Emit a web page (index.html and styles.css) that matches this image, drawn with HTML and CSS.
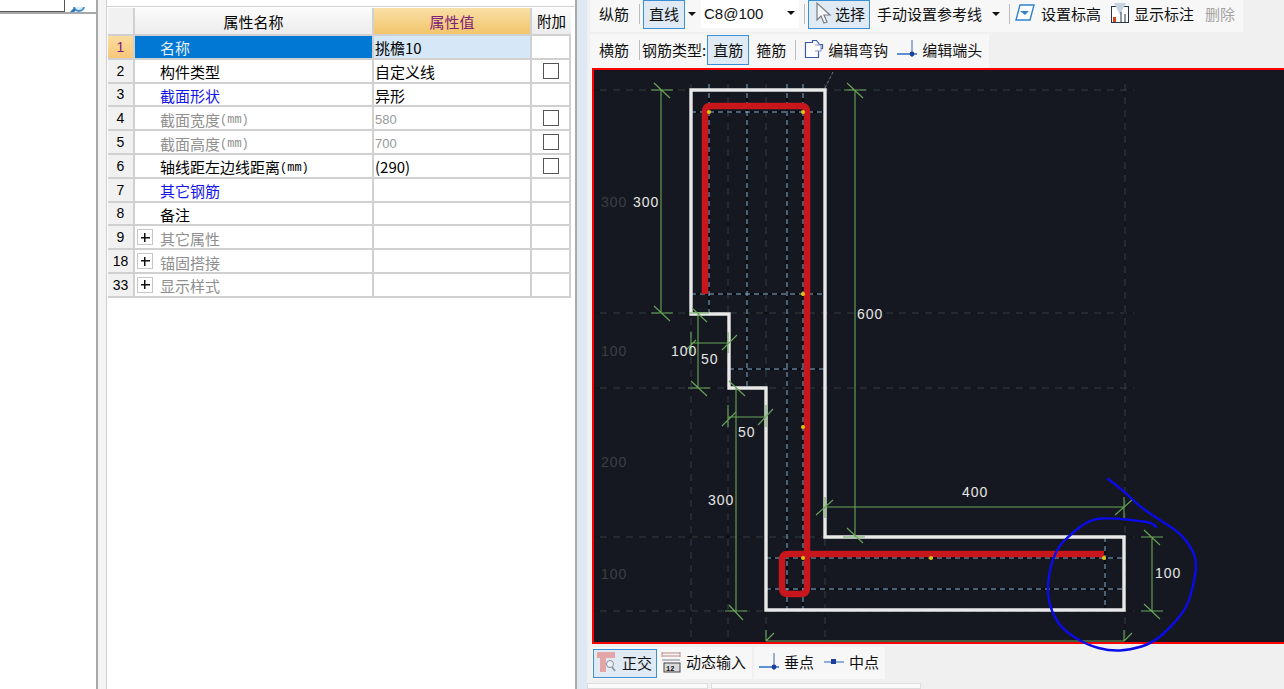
FILE: index.html
```html
<!DOCTYPE html>
<html lang="zh-CN">
<head>
<meta charset="utf-8">
<title>属性编辑</title>
<link rel="stylesheet" href="styles.css">
</head>
<body>
<div class="app">
  <aside class="tree">
    <div class="search">
      <div class="search-input"></div>
      <div class="search-btn">
        <svg width="22" height="10" viewBox="0 0 22 10"><circle cx="14" cy="-1" r="5" fill="#dcecf9" stroke="#3d8fd1" stroke-width="2"/><path d="M10 2 5 7" stroke="#2a76b8" stroke-width="3"/></svg>
      </div>
    </div>
  </aside>
  <section class="props">
    <div class="panel">
      <div class="props-top"></div>
      <div class="grid">
        <div class="c head num"></div><div class="c head">属性名称</div><div class="c head value-head">属性值</div><div class="c head extra-head">附加</div>

        <div class="c num cur">1</div><div class="c name sel">名称</div><div class="c val vsel">挑檐10</div><div class="c box"></div>
        <div class="c num">2</div><div class="c name">构件类型</div><div class="c val">自定义线</div><div class="c box"><i class="chk"></i></div>
        <div class="c num">3</div><div class="c name blue">截面形状</div><div class="c val">异形</div><div class="c box"></div>
        <div class="c num">4</div><div class="c name gray"><span>截面宽度</span><small>(mm)</small></div><div class="c val gnum">580</div><div class="c box"><i class="chk"></i></div>
        <div class="c num">5</div><div class="c name gray"><span>截面高度</span><small>(mm)</small></div><div class="c val gnum">700</div><div class="c box"><i class="chk"></i></div>
        <div class="c num">6</div><div class="c name"><span>轴线距左边线距离</span><small>(mm)</small></div><div class="c val">(290)</div><div class="c box"><i class="chk"></i></div>
        <div class="c num">7</div><div class="c name blue">其它钢筋</div><div class="c val"></div><div class="c box"></div>
        <div class="c num">8</div><div class="c name">备注</div><div class="c val"></div><div class="c box"></div>
        <div class="c num">9</div><div class="c name gray tree-row"><i class="plus"></i>其它属性</div><div class="c val"></div><div class="c box"></div>
        <div class="c num">18</div><div class="c name gray tree-row"><i class="plus"></i>锚固搭接</div><div class="c val"></div><div class="c box"></div>
        <div class="c num">33</div><div class="c name gray tree-row"><i class="plus"></i>显示样式</div><div class="c val"></div><div class="c box"></div>
      </div>
    </div>
  </section>
  <main class="editor">
    <div class="bars">
      <div class="bar bar1">
        <span class="lbl">纵筋</span>
        <span class="sep s-line"></span>
        <span class="tbtn">直线</span>
        <span class="caret c-line"></span>
        <span class="combo">C8@100<span class="caret c-combo"></span></span>
        <span class="sep s-combo"></span>
        <span class="tbtn pick">
          <svg width="18" height="24" viewBox="0 0 18 24"><path d="M2 2v17l4-4 3 7 3-1-3-7h6z" fill="#f4f6f8" stroke="#7b7f85" stroke-width="1.2"/></svg>
          <span>选择</span></span>
        <span class="lbl manual">手动设置参考线</span>
        <span class="caret c-manual"></span>
        <span class="sep s-manual"></span>
        <span class="lbl ico level">
          <svg width="20" height="20" viewBox="0 0 20 20"><path d="M5 2h14l-4 15H1z" fill="#fff" stroke="#2c84cf" stroke-width="1.4"/><path d="M5 8h9l-4 4z" fill="#2c84cf"/></svg>
          <span>设置标高</span></span>
        <span class="lbl ico mark">
          <svg width="20" height="22" viewBox="0 0 20 22"><rect x="1.5" y="4.5" width="17" height="16" fill="#fff" stroke="#26344a"/><path d="M4 1h12l-6 12z" fill="#c6d4e2"/><path d="M11 10v10M15 12v8" stroke="#26344a"/><rect x="3" y="15" width="3" height="5" fill="#d8401f"/></svg>
          <span>显示标注</span></span>
        <span class="lbl dis">删除</span>
      </div>
      <div class="bar bar2">
        <span class="lbl">横筋</span>
        <span class="sep s-cross"></span>
        <span class="lbl type">钢筋类型:</span>
        <span class="tbtn straight">直筋</span>
        <span class="lbl hoop">箍筋</span>
        <span class="sep s-hoop"></span>
        <span class="lbl ico hook">
          <svg width="20" height="20" viewBox="0 0 20 20"><path d="M1.5 3.5h7v-2h4l3 4h3v4h-4v9h-13z" fill="#fff" stroke="#3c5aa6" stroke-width="1.2"/><path d="M11 6h6v6h-6" fill="#fff" stroke="#8093c6"/></svg>
          <span>编辑弯钩</span></span>
        <span class="lbl ico end">
          <svg width="20" height="20" viewBox="0 0 20 20"><path d="M0 15h20" stroke="#2a6fc4" stroke-width="1.5"/><path d="M15 1v17" stroke="#5c7fb0" stroke-width="1.2"/><circle cx="15" cy="15" r="2.4" fill="#1c3f9a"/></svg>
          <span>编辑端头</span></span>
      </div>
    </div>
    <div class="canvas">
      <svg class="drawing" viewBox="594 70 690 572" width="690" height="572" xmlns="http://www.w3.org/2000/svg">
        <defs>
          <path id="axes" d="M594 90H1134M594 313H1134M594 388H1134M594 537H1134M594 611H1134M691 78V642M728 78V642M766 78V642M825 78V642M1125 78V642"/>
          <path id="guides" d="M709 84V313M747 84V388M787 84V611M803 84V611M691 112H825M691 294H825M729 369H825M766 558H1124M766 589H1124M1105 537V611"/>
        </defs>
        <use href="#axes" class="axis-base"/>
        <use href="#axes" class="axis-dash"/>
        <g class="faint">
          <text x="601" y="207">300</text><text x="601" y="356">100</text>
          <text x="601" y="467">200</text><text x="601" y="579">100</text>
        </g>
        <use href="#guides" class="guide-base"/>
        <use href="#guides" class="guide-dash"/>
        <path class="tail" d="M825 88 833 72"/>
        <path class="outline" d="M691 90H825V537H1124V610H766V388H729V314H691Z"/>
        <path class="rebar" d="M705 294V112Q705 106 711 106H801Q807 106 807 112V588Q807 594 801 594H788Q782 594 782 588V560Q782 554 788 554H1104"/>
        <g class="node">
          <circle cx="709" cy="112" r="2"/><circle cx="803" cy="112" r="2"/><circle cx="803" cy="294" r="2"/>
          <circle cx="803" cy="427" r="2"/><circle cx="803" cy="558" r="2"/><circle cx="931" cy="558" r="2"/><circle cx="1104" cy="558" r="2"/>
        </g>
        <g class="dim">
          <path d="M651 90H673M661 90V313M651 313H673M654 83l16 15M654 306l16 15"/>
          <path d="M844 90H866M855 90V537M843 537H865M847 83l16 15M847 528l16 15"/>
          <path d="M698 313V388M689 313H709M688 388H710M692 308l15 14M691 381l16 15"/>
          <path d="M691 343H728M691 332V353M728 332V353M722 350l15-15M686 350l10-10"/>
          <path d="M736 388V611M725 611H747M729 381l16 15M729 605l14 15"/>
          <path d="M728 417H766M728 405V427M766 405V427M722 426l14-14M758 425l15-16"/>
          <path d="M825 507H1124M825 497V518M1124 497V518M816 515l17-15M1115 515l17-15"/>
          <path d="M1141 537H1163M1152 537V611M1141 611H1163M1144 530l16 15M1144 604l16 15"/>
          <path d="M766 641H1124M766 630V641M766 641l8-8M1124 630V641M1124 641l8-8"/>
        </g>
        <g class="dimtxt">
          <text x="633" y="207">300</text><text x="857" y="319">600</text><text x="671" y="356">100</text>
          <text x="701" y="364">50</text><text x="738" y="437">50</text><text x="708" y="505">300</text>
          <text x="962" y="497">400</text><text x="1155" y="578">100</text>
        </g>
        <path class="pen" d="M1108 479Q1123 490 1131.5 498.5Q1140 507 1151.5 514.5Q1163 522 1171.5 527.5Q1180 533 1186.5 541.5Q1193 550 1195 557.5Q1197 565 1195 576Q1193 587 1190 597Q1187 607 1180 616Q1173 625 1163 634Q1153 643 1141.5 646.5Q1130 650 1120 650.5Q1110 651 1098.5 648Q1087 645 1075 637.5Q1063 630 1057.5 621.5Q1052 613 1049.5 603Q1047 593 1048.5 580Q1050 567 1054 557Q1058 547 1064 541Q1070 535 1080 527Q1090 519 1101.5 518.5Q1113 518 1126.5 519.5Q1140 521 1146.5 522Q1153 523 1156 527"/>
      </svg>
    </div>
    <div class="status">
      <div class="sgroup first">
        <span class="tbtn ortho">
          <svg width="22" height="22" viewBox="0 0 22 22"><path d="M1 1h18v6h-9v14H4V7H1z" fill="#e3a5a5"/><circle cx="14" cy="13" r="3.5" fill="#eef1f4" stroke="#8a9098"/><path d="M16 16l3 4" stroke="#8a9098" stroke-width="1.6"/></svg>
          <span>正交</span></span>
        <span class="lbl ico dyn">
          <svg width="20" height="22" viewBox="0 0 20 22"><path d="M1 2h18M1 5h18M1 1v5M19 1v5" stroke="#b98a8a"/><path d="M1 9h18" stroke="#7d8289"/><rect x="3" y="12" width="16" height="9" fill="#d9dadb" stroke="#444"/><text x="5" y="20" class="mini">12</text></svg>
          <span>动态输入</span></span>
      </div>
      <div class="sgroup second">
        <span class="lbl ico foot">
          <svg width="22" height="20" viewBox="0 0 22 20"><path d="M1 15h20" stroke="#2a6fc4" stroke-width="1.5"/><path d="M16 1v17" stroke="#5c7fb0" stroke-width="1.2"/><circle cx="16" cy="15" r="2.4" fill="#1c3f9a"/></svg>
          <span>垂点</span></span>
        <span class="lbl ico mid">
          <svg width="20" height="10" viewBox="0 0 20 10"><path d="M0 5h20" stroke="#6d95cc" stroke-width="1.5"/><rect x="7" y="2" width="5" height="5" fill="#1c3f9a"/></svg>
          <span>中点</span></span>
      </div>
    </div>
    <div class="tabs"><span class="tab t1"></span><span class="tab t2"></span></div>
  </main>
</div>
</body>
</html>
```
FILE: styles.css
```css
* { box-sizing: border-box; }
html, body { margin: 0; height: 100%; overflow: hidden; }
body { font-family: "Noto Sans CJK SC", "Liberation Sans", sans-serif; font-size: 15px; color: #000; background: #f0f0f0; }
.app { display: flex; width: 1284px; height: 689px; }

/* left tree pane */
.tree { width: 98px; background: #fff; border-right: 2px solid #a6a8aa; flex: none; }
.search { display: flex; height: 14px; border-bottom: 2px solid #a8a8a8; }
.search-input { width: 65px; background: #fff; border-right: 1px solid #555; border-bottom: 1px solid #555; }
.search-btn { width: 31px; overflow: hidden; }

/* property grid pane */
.props { width: 479px; flex: none; background: #fff; border-left: 8px solid #f4f4f4; border-right: 2px solid #a9abad; }
.panel { height: 100%; border-left: 1px solid #cfd0d1; }
.props-top { height: 8px; }
.props-top::before { content: ""; display: block; height: 6px; border-bottom: 1px solid #cfd0d1; }
.grid { display: grid; grid-template-columns: 27px 239px 158px 39px; grid-template-rows: 28px repeat(11, 23.8px); width: 463px; margin-left: 1px; }
.c { border-right: 2px solid #d0d0d0; border-bottom: 2px solid #d0d0d0; display: flex; align-items: center; white-space: nowrap; line-height: 1; overflow: hidden; }
.head { background: linear-gradient(#fbfbfb, #ececec); justify-content: center; }
.value-head { background: linear-gradient(#f9dfa6, #f2c56b); color: #7d2179; }
.extra-head { font-size: 14.5px; border-right: 0; }
.num { background: #f1f1f1; justify-content: center; font-family: "Liberation Sans", sans-serif; font-size: 14px; }
.cur { background: linear-gradient(#fbdca0, #f6c778); color: #7d2179; }
.name { padding: 2px 0 0 25px; }
.sel { background: #0078d4; color: #e8f2fb; }
.val { padding: 2px 0 0 1px; }
.vsel { background: #d6e8f7; }
.box { justify-content: center; }
.chk { display: block; width: 16px; height: 16px; border: 1.5px solid #555; background: #fff; }
.blue { color: #1414e8; }
.gray { color: #8f8f8f; }
.gnum { color: #999; font-family: "Liberation Sans", sans-serif; font-size: 13px; }
small { font-family: "Liberation Mono", monospace; font-size: 12px; margin-top: 2px; }
.tree-row { padding-left: 2px; }
.plus { display: block; width: 16px; height: 16px; margin: -2px 7px 0 0; border: 1px solid #c6c6c6; background: linear-gradient(#111, #111) center / 9px 1.5px no-repeat, linear-gradient(#111, #111) center / 1.5px 9px no-repeat, #fff; }

/* editor */
.editor { flex: 1; min-width: 0; display: flex; flex-direction: column; border-left: 10px solid #dfe9f4; background: #f0f0f0; }
.bars { height: 68px; display: flex; flex-direction: column; gap: 2px; padding-left: 3px; flex: none; }
.bar { display: flex; align-items: center; background: #f7f7f7; white-space: nowrap; color: #111; padding-left: 9px; }
.bar1 { width: 653px; height: 32px; padding-bottom: 4px; }
.bar2 { width: 399px; height: 34px; padding-top: 1px; padding-bottom: 3px; }
.lbl { display: inline-flex; align-items: center; flex: none; padding-bottom: 2px; }
.ico { gap: 6px; }
.sep { width: 1px; height: 20px; background: #bcbcbc; flex: none; }
.tbtn { display: inline-flex; align-items: center; flex: none; height: 29px; padding: 0 5px 2px; background: #dfeaf5; border: 1px solid #3b8fd4; }
.caret { display: inline-block; flex: none; width: 0; height: 0; border: 4px solid transparent; border-top: 4px solid #111; border-bottom: 0; }
.combo { display: inline-flex; align-items: center; justify-content: space-between; flex: none; width: 98px; height: 28px; background: #fff; padding: 0 4px 2px 3px; font-family: "Liberation Sans", sans-serif; }

/* first toolbar row */
.s-line { margin: 0 3px 0 10px; }
.c-line { margin: 0 5px 0 3px; }
.s-combo { margin: 0 3px 0 5px; }
.pick { gap: 2px; padding: 0 4px 2px 6px; }
.manual { margin-left: 7px; }
.c-manual { margin-left: 10px; }
.s-manual { margin: 0 5px 0 9px; }
.mark { gap: 4px; margin-left: 9px; }
.dis { color: #a4a4a4; margin-left: 11px; }

/* second toolbar row */
.s-cross { margin: 0 2px 0 10px; }
.straight { height: 30px; margin-left: 1px; }
.hoop { margin-left: 7px; }
.s-hoop { margin: 0 8px 0 9px; }
.hook { gap: 4px; }
.end { gap: 5px; margin-left: 9px; }

/* drawing */
.canvas { height: 576px; flex: none; margin-left: 5px; border: 2px solid #f00; border-right: 0; background: #151820; position: relative; z-index: 1; }
.drawing { display: block; overflow: visible; }
.axis-base { fill: none; stroke: #343c44; stroke-width: 1; }
.axis-dash { fill: none; stroke: #000; stroke-width: 1; stroke-dasharray: 6 7; }
.guide-base { fill: none; stroke: #000; stroke-width: 1; }
.guide-dash { fill: none; stroke: #8ab4d8; stroke-width: 1; stroke-dasharray: 5 4; }
.tail { fill: none; stroke: #777; stroke-dasharray: 3 2; }
.outline { fill: none; stroke: #e9e9e9; stroke-width: 3.4; }
.rebar { fill: none; stroke: #c8161d; stroke-width: 6.5; }
.node circle { fill: #e5c60f; }
.dim path { fill: none; stroke: #68a658; stroke-width: 1.1; }
.faint text { fill: #3a3f46; font: 14px "Liberation Sans", sans-serif; letter-spacing: 1px; }
.dimtxt text { fill: #e6e6e6; font: 14px "Liberation Sans", sans-serif; letter-spacing: 1px; }
.pen { fill: none; stroke: #0b0bea; stroke-width: 2.4; stroke-linecap: round; }

/* status bar */
.status { height: 36px; flex: none; display: flex; gap: 2px; align-items: flex-start; margin-left: 5px; padding-top: 3px; color: #111; }
.sgroup { display: flex; align-items: center; height: 32px; background: #f7f7f7; }
.sgroup .lbl { padding-bottom: 3px; }
.first { padding: 0 6px 0 1px; }
.second { padding: 0 6px 0 4px; }
.ortho { gap: 4px; height: 29px; padding: 0 4px 2px 2px; }
.dyn { gap: 5px; margin-left: 4px; }
.foot { gap: 4px; }
.mid { gap: 5px; margin-left: 10px; }
.mini { font: bold 7px "Liberation Mono", monospace; fill: #111; }
.tabs { display: flex; gap: 3px; padding-top: 3px; }
.tab { height: 6px; background: #fafafa; border: 1px solid #ddd; }
.t1 { width: 121px; }
.t2 { width: 210px; }
```
